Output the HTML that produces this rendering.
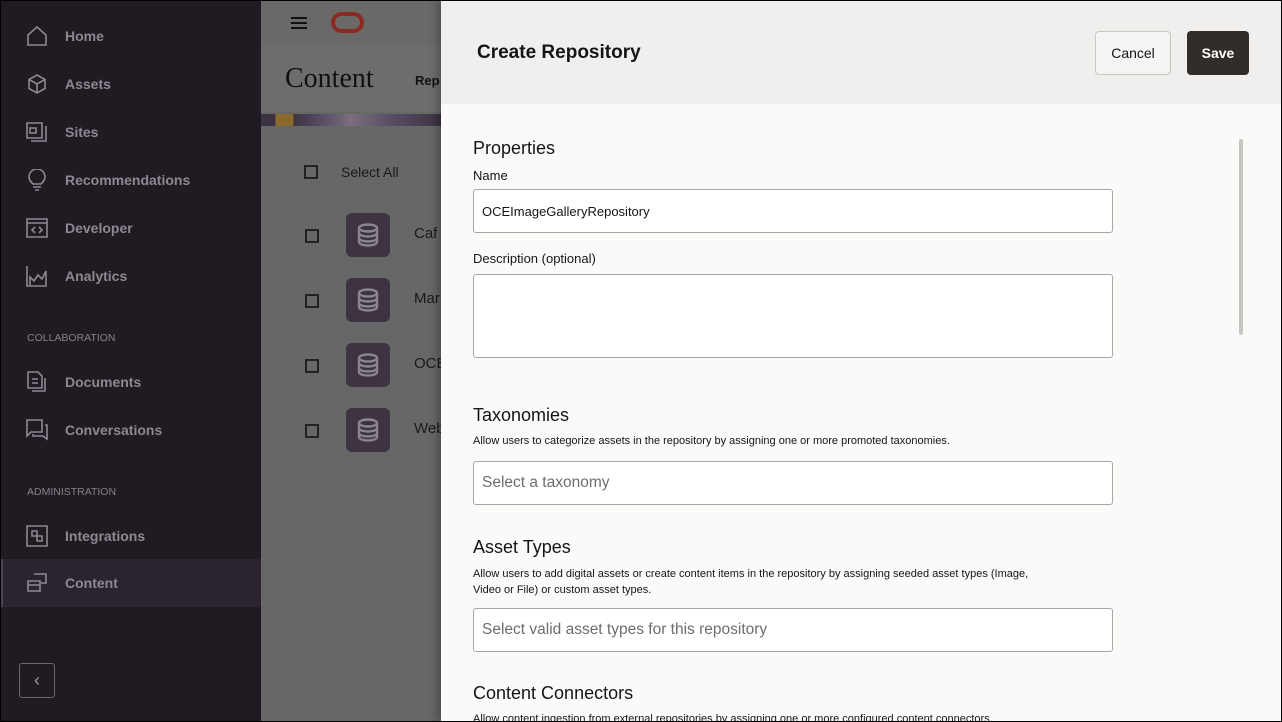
<!DOCTYPE html>
<html><head><meta charset="utf-8"><style>
*{margin:0;padding:0;box-sizing:border-box}
html,body{width:1282px;height:722px;overflow:hidden}
body{position:relative;font-family:"Liberation Sans",sans-serif;background:#676767}
.frame{position:absolute;left:0;top:0;width:1282px;height:722px;border:1px solid #000;pointer-events:none;z-index:10}
.side{position:absolute;left:0;top:0;width:261px;height:722px;background:#201b23}
.nav{position:absolute;left:0;width:261px;height:48px;display:flex;align-items:center;color:#8c8891;font-size:14px;font-weight:bold}
.nav svg{position:absolute;left:26px;width:22px;height:22px}
.nav span{position:absolute;left:65px}
.sec{position:absolute;left:27px;font-size:10.5px;color:#85818a}
.overlay{position:absolute;left:261px;top:0;width:180px;height:722px;background:#676767}
.panel{position:absolute;left:441px;top:0;width:841px;height:722px;background:#fbfaf9;box-shadow:-4px 0 8px rgba(0,0,0,.25)}
.ph{position:absolute;left:0;top:0;width:841px;height:104px;background:#f0efed}
h1{position:absolute;left:36px;top:42px;font-size:19px;font-weight:bold;color:#161513}
.btn{position:absolute;top:31px;height:44px;border-radius:4px;font-size:14px;display:flex;align-items:center;justify-content:center}
h2{position:absolute;left:32px;font-size:18px;font-weight:normal;color:#161513}
.lbl{position:absolute;left:32px;font-size:13px;color:#161513}
.d{position:absolute;left:32px;font-size:11px;color:#161513;line-height:16px;width:620px}
.inp{position:absolute;left:32px;width:640px;background:#fff;border:1px solid #a9a7a4;border-radius:3px;font-size:15.5px;color:#6f6d6a;padding-left:8px;display:flex;align-items:center}
.cb{position:absolute;width:14px;height:14px;border:2px solid #222}
.ri{position:absolute;width:44px;height:44px;border-radius:6px;background:#3e3340}
.ri svg{position:absolute;left:11px;top:10px}
.rt{position:absolute;font-size:15px;color:#1a1a1a}
</style></head><body>
<div class="side">
 <div class="nav" style="top:12px"><svg viewBox="0 0 22 22" fill="none" stroke="#8c8891" stroke-width="1.6"><path d="M2 10L11 2l9 8v10H2z"/></svg><span>Home</span></div>
 <div class="nav" style="top:60px"><svg viewBox="0 0 22 22" fill="none" stroke="#8c8891" stroke-width="1.6"><path d="M11 2l8 4.5v9L11 20l-8-4.5v-9z M3 6.5l8 4.5 8-4.5 M11 11v9"/></svg><span>Assets</span></div>
 <div class="nav" style="top:108px"><svg viewBox="0 0 22 22" fill="none" stroke="#8c8891" stroke-width="1.6"><path d="M1 2h15v15H1z M5 20h15V5 M4 7h6v5H4z"/></svg><span>Sites</span></div>
 <div class="nav" style="top:156px"><svg viewBox="0 0 22 22" fill="none" stroke="#8c8891" stroke-width="1.6"><path d="M7 15c-2-2-4-4-4-7a8 8 0 0 1 16 0c0 3-2 5-4 7z M7 18h8 M9 21h4"/></svg><span>Recommendations</span></div>
 <div class="nav" style="top:204px"><svg viewBox="0 0 22 22" fill="none" stroke="#8c8891" stroke-width="1.6"><path d="M1 2h20v18H1z M1 6h20 M9 10l-3 3 3 3 M13 10l3 3-3 3"/></svg><span>Developer</span></div>
 <div class="nav" style="top:252px"><svg viewBox="0 0 22 22" fill="none" stroke="#8c8891" stroke-width="1.6"><path d="M1 1v20h20 M4 20v-8l4 4 4-6 4 4 4-8v14"/></svg><span>Analytics</span></div>
 <div class="sec" style="top:332px">COLLABORATION</div>
 <div class="nav" style="top:358px"><svg viewBox="0 0 22 22" fill="none" stroke="#8c8891" stroke-width="1.6"><path d="M2 1h10l4 4v12H2z M6 8h6 M6 12h6 M6 20h13V7"/></svg><span>Documents</span></div>
 <div class="nav" style="top:406px"><svg viewBox="0 0 22 22" fill="none" stroke="#8c8891" stroke-width="1.6"><path d="M1 1h15v12H5l-4 4z M19 6h2v14l-4-3H7v-2"/></svg><span>Conversations</span></div>
 <div class="sec" style="top:486px">ADMINISTRATION</div>
 <div class="nav" style="top:512px"><svg viewBox="0 0 22 22" fill="none" stroke="#8c8891" stroke-width="1.6"><path d="M1 1h20v20H1z M6 6h5v5H6z M11 11h5v5h-5z"/></svg><span>Integrations</span></div>
 <div class="nav" style="top:559px;background:#2b2430;border-left:3px solid #4c4450"><svg viewBox="0 0 22 22" fill="none" stroke="#8c8891" stroke-width="1.6" style="left:23px"><path d="M8 2h12v9h-5 M2 9h12v10H2z M2 13h12"/></svg><span style="left:62px">Content</span></div>
 <div style="position:absolute;left:19px;top:663px;width:36px;height:35px;border:1px solid #6a6570;border-radius:3px;color:#9a96a0;font-size:18px;text-align:center;line-height:32px">&#8249;</div>
</div>
<div class="overlay">
 <div style="position:absolute;left:0;top:0;width:180px;height:45px;background:#6a6968"></div>
 <div style="position:absolute;left:30px;top:17px;width:16px;height:2px;background:#111;box-shadow:0 5px 0 #111,0 10px 0 #111"></div>
 <div style="position:absolute;left:70px;top:12px;width:33px;height:21px;border:4px solid #8a2a22;border-radius:11px"></div>
 <div style="position:absolute;left:0;top:45px;width:180px;height:67px;background:#6e6d6c"></div>
 <div style="position:absolute;left:24px;top:63px;font-family:'Liberation Serif',serif;font-size:28px;color:#111">Content</div>
 <div style="position:absolute;left:154px;top:73px;font-size:13px;font-weight:bold;color:#111">Rep</div>
 <div style="position:absolute;left:0;top:114px;width:180px;height:12px;background:linear-gradient(90deg,#3d3244 0,#3d3244 8%,#8a6a2a 8%,#8a6a2a 18%,#3d3244 18%,#5c5064 35%,#7a6e80 50%,#5c5064 70%,#3d3244 100%)"></div>
 <div class="cb" style="left:43px;top:165px"></div>
 <div style="position:absolute;left:80px;top:164px;font-size:14px;color:#1a1a1a">Select All</div>
 <div class="cb" style="left:44px;top:229px"></div><div class="ri" style="left:85px;top:213px"><svg width="22" height="24" viewBox="0 0 22 24" fill="none" stroke="#8a8590" stroke-width="2.4"><ellipse cx="11" cy="5" rx="9" ry="3.5"/><path d="M2 5v14c0 2 4 3.5 9 3.5s9-1.5 9-3.5V5 M2 10c0 2 4 3.5 9 3.5s9-1.5 9-3.5 M2 15c0 2 4 3.5 9 3.5s9-1.5 9-3.5"/></svg></div><div class="rt" style="left:153px;top:225px">Caf</div>
 <div class="cb" style="left:44px;top:294px"></div><div class="ri" style="left:85px;top:278px"><svg width="22" height="24" viewBox="0 0 22 24" fill="none" stroke="#8a8590" stroke-width="2.4"><ellipse cx="11" cy="5" rx="9" ry="3.5"/><path d="M2 5v14c0 2 4 3.5 9 3.5s9-1.5 9-3.5V5 M2 10c0 2 4 3.5 9 3.5s9-1.5 9-3.5 M2 15c0 2 4 3.5 9 3.5s9-1.5 9-3.5"/></svg></div><div class="rt" style="left:153px;top:290px">Mar</div>
 <div class="cb" style="left:44px;top:359px"></div><div class="ri" style="left:85px;top:343px"><svg width="22" height="24" viewBox="0 0 22 24" fill="none" stroke="#8a8590" stroke-width="2.4"><ellipse cx="11" cy="5" rx="9" ry="3.5"/><path d="M2 5v14c0 2 4 3.5 9 3.5s9-1.5 9-3.5V5 M2 10c0 2 4 3.5 9 3.5s9-1.5 9-3.5 M2 15c0 2 4 3.5 9 3.5s9-1.5 9-3.5"/></svg></div><div class="rt" style="left:153px;top:355px">OCE</div>
 <div class="cb" style="left:44px;top:424px"></div><div class="ri" style="left:85px;top:408px"><svg width="22" height="24" viewBox="0 0 22 24" fill="none" stroke="#8a8590" stroke-width="2.4"><ellipse cx="11" cy="5" rx="9" ry="3.5"/><path d="M2 5v14c0 2 4 3.5 9 3.5s9-1.5 9-3.5V5 M2 10c0 2 4 3.5 9 3.5s9-1.5 9-3.5 M2 15c0 2 4 3.5 9 3.5s9-1.5 9-3.5"/></svg></div><div class="rt" style="left:153px;top:420px">Web</div>
</div>
<div class="panel">
 <div class="ph"></div>
 <h1>Create Repository</h1>
 <div class="btn" style="left:654px;width:76px;border:1px solid #c9c7c4;background:#f5f4f2;color:#161513">Cancel</div>
 <div class="btn" style="left:746px;width:62px;background:#312d2a;color:#fff;font-weight:bold">Save</div>
 <div style="position:absolute;left:798px;top:139px;width:4px;height:196px;background:#c8c6c3;border-radius:2px"></div>
 <h2 style="top:138px">Properties</h2>
 <div class="lbl" style="top:168px">Name</div>
 <div class="inp" style="top:189px;height:44px;font-size:13px;color:#161513">OCEImageGalleryRepository</div>
 <div class="lbl" style="top:251px">Description (optional)</div>
 <div class="inp" style="top:274px;height:84px"></div>
 <h2 style="top:405px">Taxonomies</h2>
 <div class="d" style="top:433px">Allow users to categorize assets in the repository by assigning one or more promoted taxonomies.</div>
 <div class="inp" style="top:461px;height:44px">Select a taxonomy</div>
 <h2 style="top:537px">Asset Types</h2>
 <div class="d" style="top:566px">Allow users to add digital assets or create content items in the repository by assigning seeded asset types (Image,<br>Video or File) or custom asset types.</div>
 <div class="inp" style="top:608px;height:44px">Select valid asset types for this repository</div>
 <h2 style="top:683px">Content Connectors</h2>
 <div class="d" style="top:711px;width:700px">Allow content ingestion from external repositories by assigning one or more configured content connectors.</div>
</div>
<div class="frame"></div>
</body></html>
